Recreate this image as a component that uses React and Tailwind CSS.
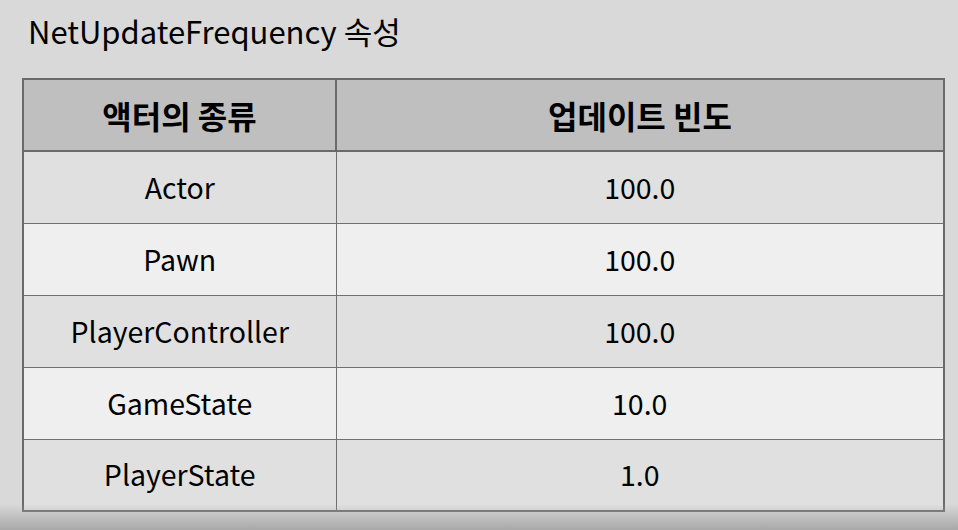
import React from 'react';

const rows = [
  ['Actor', '100.0'],
  ['Pawn', '100.0'],
  ['PlayerController', '100.0'],
  ['GameState', '10.0'],
  ['PlayerState', '1.0'],
];

const App = () => {
  return (
    <div
      className="w-[958px] h-[530px] overflow-hidden bg-[#d9d9d9] relative text-black"
      style={{ fontFamily: '"Noto Sans CJK KR", "Noto Sans", sans-serif' }}
    >
      <div className="pl-[28px] pt-[11px] h-[78px] text-[31px] leading-[40px]">
        NetUpdateFrequency 속성
      </div>

      <table className="ml-[22px] w-[923px] border-collapse border-2 border-[#6a6a6a]">
        <thead>
          <tr className="h-[72px] bg-[#bfbfbf]">
            <th className="w-[313px] border-2 border-[#6a6a6a] text-[32px] font-bold">액터의 종류</th>
            <th className="border-2 border-[#6a6a6a] text-[32px] font-bold">업데이트 빈도</th>
          </tr>
        </thead>
        <tbody>
          {rows.map(([name, freq], i) => (
            <tr key={name} className={`h-[72px] ${i % 2 === 0 ? 'bg-[#e0e0e0]' : 'bg-[#efefef]'}`}>
              <td className="border border-[#707070] text-center text-[28.5px]">{name}</td>
              <td className="border border-[#707070] text-center text-[28.5px]">{freq}</td>
            </tr>
          ))}
        </tbody>
      </table>

      {/* bottom shade */}
      <div className="absolute left-0 right-0 bottom-0 h-[26px] bg-gradient-to-b from-[#d9d9d9]/0 to-[#a8a8a8]" />
    </div>
  );
};

export default App;
